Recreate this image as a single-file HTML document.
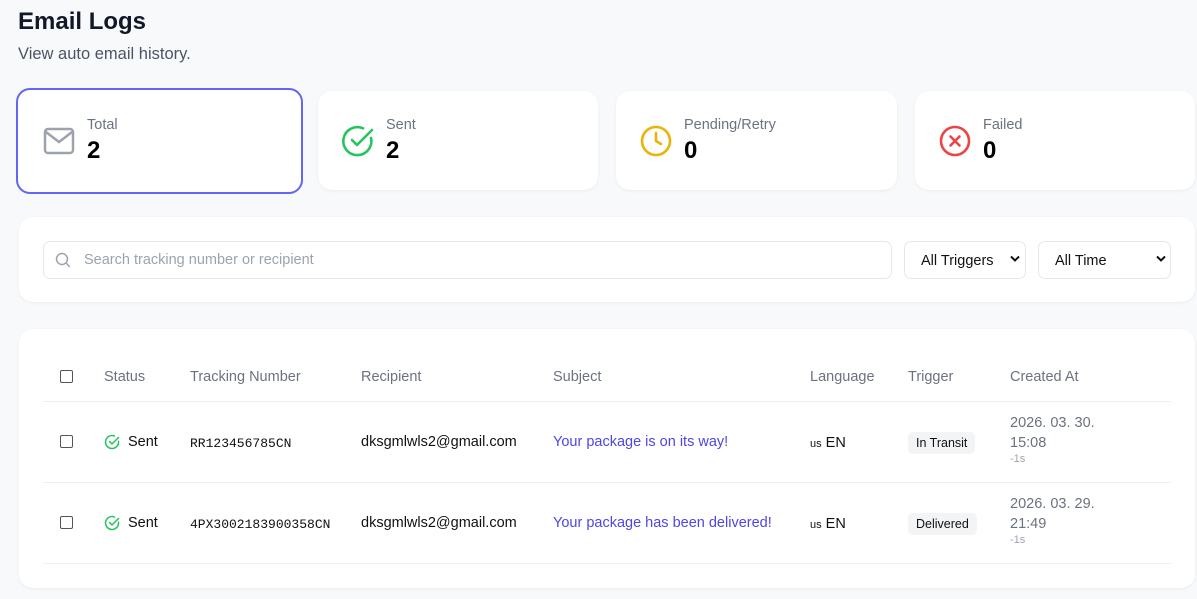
<!DOCTYPE html>
<html><head><meta charset="utf-8"><style>
*{box-sizing:border-box;margin:0;padding:0}
body{width:1197px;height:599px;overflow:hidden;background:#f8f9fb;font-family:"Liberation Sans",Arial,sans-serif;color:#111827;position:relative}
.a{position:absolute}
.card{position:absolute;background:#fff;border-radius:14px;box-shadow:0 1px 3px rgba(0,0,0,.06)}
.lbl{font-size:14.5px;color:#6b7280}
.num{font-size:24px;font-weight:bold;color:#000}
.th{position:absolute;top:369px;font-size:14.5px;color:#6b7280}
.cb{position:absolute;left:60px;width:13px;height:13px;border:1.5px solid #555;border-radius:2px;background:#fff}
.line{position:absolute;left:43px;width:1128px;height:1px;background:#eef0f3}
.td{position:absolute;font-size:14.5px;color:#111}
.mono{font-family:"Liberation Mono",monospace;font-size:13px}
.sub{color:#4f46e5}
.badge{position:absolute;left:908px;background:#f3f4f6;border-radius:5px;font-size:12.5px;padding:4px 8px;color:#111}
.date{position:absolute;left:1010px;font-size:14.5px;color:#6b7280;line-height:20px}
.date small{display:block;font-size:11px;color:#9ca3af;line-height:12px}
.sel{position:absolute;top:241px;height:38px;border:1px solid #e5e7eb;border-radius:7px;font-size:14.5px;padding:11px 16px;color:#111}
</style></head><body>
<div class="a" style="left:18px;top:8px;font-size:24px;font-weight:bold;color:#111827">Email Logs</div>
<div class="a" style="left:18px;top:45px;font-size:16.5px;color:#4b5563">View auto email history.</div>

<div class="card" style="left:16px;top:88px;width:287px;height:106px;border:2px solid #6366f1;box-shadow:none"></div>
<svg class="a" style="left:43px;top:127px" width="32" height="28" viewBox="0 0 32 28"><rect x="2" y="2" width="28" height="24" rx="3" fill="none" stroke="#9ca3af" stroke-width="2.5"/><path d="M3 5l13 10 13-10" fill="none" stroke="#9ca3af" stroke-width="2.5"/></svg>
<div class="a lbl" style="left:87px;top:117px">Total</div>
<div class="a num" style="left:87px;top:137px">2</div>

<div class="card" style="left:318px;top:91px;width:280px;height:99px"></div>
<svg class="a" style="left:341px;top:124px" width="34" height="34" viewBox="0 0 34 34"><path d="M30 14A14 14 0 1 1 22 4.3" fill="none" stroke="#22c55e" stroke-width="2.6" stroke-linecap="round"/><path d="M11 16l5 5L31 6" fill="none" stroke="#22c55e" stroke-width="2.6" stroke-linecap="round" stroke-linejoin="round"/></svg>
<div class="a lbl" style="left:386px;top:117px">Sent</div>
<div class="a num" style="left:386px;top:137px">2</div>

<div class="card" style="left:616px;top:91px;width:281px;height:99px"></div>
<svg class="a" style="left:640px;top:125px" width="32" height="32" viewBox="0 0 32 32"><circle cx="16" cy="16" r="14" fill="none" stroke="#eab308" stroke-width="2.6"/><path d="M16 8v8l5 3" fill="none" stroke="#eab308" stroke-width="2.6" stroke-linecap="round"/></svg>
<div class="a lbl" style="left:684px;top:117px">Pending/Retry</div>
<div class="a num" style="left:684px;top:137px">0</div>

<div class="card" style="left:915px;top:91px;width:280px;height:99px"></div>
<svg class="a" style="left:939px;top:125px" width="32" height="32" viewBox="0 0 32 32"><circle cx="16" cy="16" r="14" fill="none" stroke="#ef4444" stroke-width="2.6"/><path d="M11.5 11.5l9 9M20.5 11.5l-9 9" stroke="#ef4444" stroke-width="2.6" stroke-linecap="round"/></svg>
<div class="a lbl" style="left:983px;top:117px">Failed</div>
<div class="a num" style="left:983px;top:137px">0</div>

<div class="card" style="left:19px;top:217px;width:1176px;height:85px"></div>
<div class="a" style="left:43px;top:241px;width:849px;height:38px;border:1px solid #e5e7eb;border-radius:7px"></div>
<svg class="a" style="left:55px;top:252px" width="16" height="16" viewBox="0 0 16 16"><circle cx="7" cy="7" r="5.5" fill="none" stroke="#9ca3af" stroke-width="1.5"/><path d="M11 11l3.5 3.5" stroke="#9ca3af" stroke-width="1.5" stroke-linecap="round"/></svg>
<div class="a" style="left:84px;top:252px;font-size:14.5px;color:#9ca3af">Search tracking number or recipient</div>
<div class="sel" style="left:904px;width:122px">All Triggers</div>
<div class="sel" style="left:1038px;width:133px">All Time</div>
<svg class="a" style="left:1009px;top:255px" width="12" height="8" viewBox="0 0 12 8"><path d="M2 1.5l4 4 4-4" fill="none" stroke="#111" stroke-width="2"/></svg>
<svg class="a" style="left:1155px;top:255px" width="12" height="8" viewBox="0 0 12 8"><path d="M2 1.5l4 4 4-4" fill="none" stroke="#111" stroke-width="2"/></svg>

<div class="card" style="left:19px;top:329px;width:1176px;height:259px"></div>
<div class="cb" style="top:370px"></div>
<div class="th" style="left:104px">Status</div>
<div class="th" style="left:190px">Tracking Number</div>
<div class="th" style="left:361px">Recipient</div>
<div class="th" style="left:553px">Subject</div>
<div class="th" style="left:810px">Language</div>
<div class="th" style="left:908px">Trigger</div>
<div class="th" style="left:1010px">Created At</div>
<div class="line" style="top:401px"></div>

<div class="cb" style="top:435px"></div>
<svg class="a" style="left:104px;top:434px" width="16" height="16" viewBox="0 0 16 16"><path d="M14.5 7.2A6.5 6.5 0 1 1 10.5 2" fill="none" stroke="#22c55e" stroke-width="1.5" stroke-linecap="round"/><path d="M5.5 7.5l2.5 2.5 6.5-6.5" fill="none" stroke="#22c55e" stroke-width="1.5" stroke-linecap="round"/></svg>
<div class="td" style="left:128px;top:434px">Sent</div>
<div class="td mono" style="left:190px;top:436px">RR123456785CN</div>
<div class="td" style="left:361px;top:434px">dksgmlwls2@gmail.com</div>
<div class="td sub" style="left:553px;top:434px">Your package is on its way!</div>
<div class="td" style="left:810px;top:435px"><span style="font-size:11px">us</span> EN</div>
<div class="badge" style="top:432px">In Transit</div>
<div class="date" style="top:413px">2026. 03. 30.<br>15:08<small>-1s</small></div>
<div class="line" style="top:482px"></div>

<div class="cb" style="top:516px"></div>
<svg class="a" style="left:104px;top:515px" width="16" height="16" viewBox="0 0 16 16"><path d="M14.5 7.2A6.5 6.5 0 1 1 10.5 2" fill="none" stroke="#22c55e" stroke-width="1.5" stroke-linecap="round"/><path d="M5.5 7.5l2.5 2.5 6.5-6.5" fill="none" stroke="#22c55e" stroke-width="1.5" stroke-linecap="round"/></svg>
<div class="td" style="left:128px;top:515px">Sent</div>
<div class="td mono" style="left:190px;top:517px">4PX3002183900358CN</div>
<div class="td" style="left:361px;top:515px">dksgmlwls2@gmail.com</div>
<div class="td sub" style="left:553px;top:515px">Your package has been delivered!</div>
<div class="td" style="left:810px;top:516px"><span style="font-size:11px">us</span> EN</div>
<div class="badge" style="top:513px">Delivered</div>
<div class="date" style="top:494px">2026. 03. 29.<br>21:49<small>-1s</small></div>
<div class="line" style="top:563px"></div>
</body></html>
